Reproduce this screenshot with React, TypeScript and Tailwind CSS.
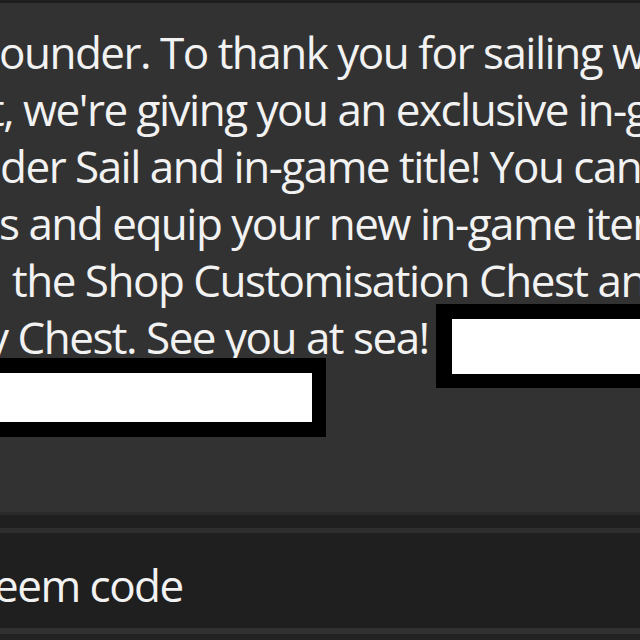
const lines: { text: string; shift: string }[] = [
  { text: 'ounder. To thank you for sailing with us', shift: '-ml-[1px]' },
  { text: "t, we're giving you an exclusive in-game", shift: '-ml-[11px]' },
  { text: 'der Sail and in-game title! You can claim', shift: 'ml-0' },
  { text: 's and equip your new in-game items from', shift: '-ml-[1px]' },
  { text: 'the Shop Customisation Chest and the', shift: 'ml-[12px]' },
  { text: 'y Chest. See you at sea!', shift: '-ml-[13px]' },
];

const App = () => {
  return (
    <div className="relative w-[640px] h-[640px] overflow-hidden bg-[#323232] font-['Open_Sans','Noto_Sans',sans-serif] text-[#f2f2f2]">
      <div className="h-[3px] bg-[#1e1e1e]" />

      <div className="h-[509px] pt-[21px] overflow-hidden">
        {lines.map((l, i) => (
          <div key={i} className={`whitespace-pre text-[44px] leading-[57px] tracking-[-1.5px] ${l.shift}`}>
            {l.text}
          </div>
        ))}
      </div>

      {/* redaction boxes */}
      <div className="absolute left-[436px] top-[304px] w-[230px] h-[84px] bg-black p-[15px_0_14px_16px]">
        <div className="w-full h-full bg-white" />
      </div>
      <div className="absolute left-[-20px] top-[358px] w-[346px] h-[79px] bg-black pt-[15px] pr-[14px] pb-[15px]">
        <div className="w-full h-full bg-white" />
      </div>

      <div className="h-[3px] bg-[#2a2a2a]" />
      <div className="h-[13px] bg-[#1f1f1f]" />
      <div className="h-[5px] bg-[#2e2e2e]" />
      <div className="h-[95px] bg-[#1f1f1f] flex items-center">
        <span className="whitespace-pre text-[44px] leading-none tracking-[-1.5px] -ml-[6px] pt-[8px]">eem code</span>
      </div>
      <div className="h-[6px] bg-[#313131]" />
      <div className="h-[6px] bg-[#222222]" />
    </div>
  );
};

export default App;
